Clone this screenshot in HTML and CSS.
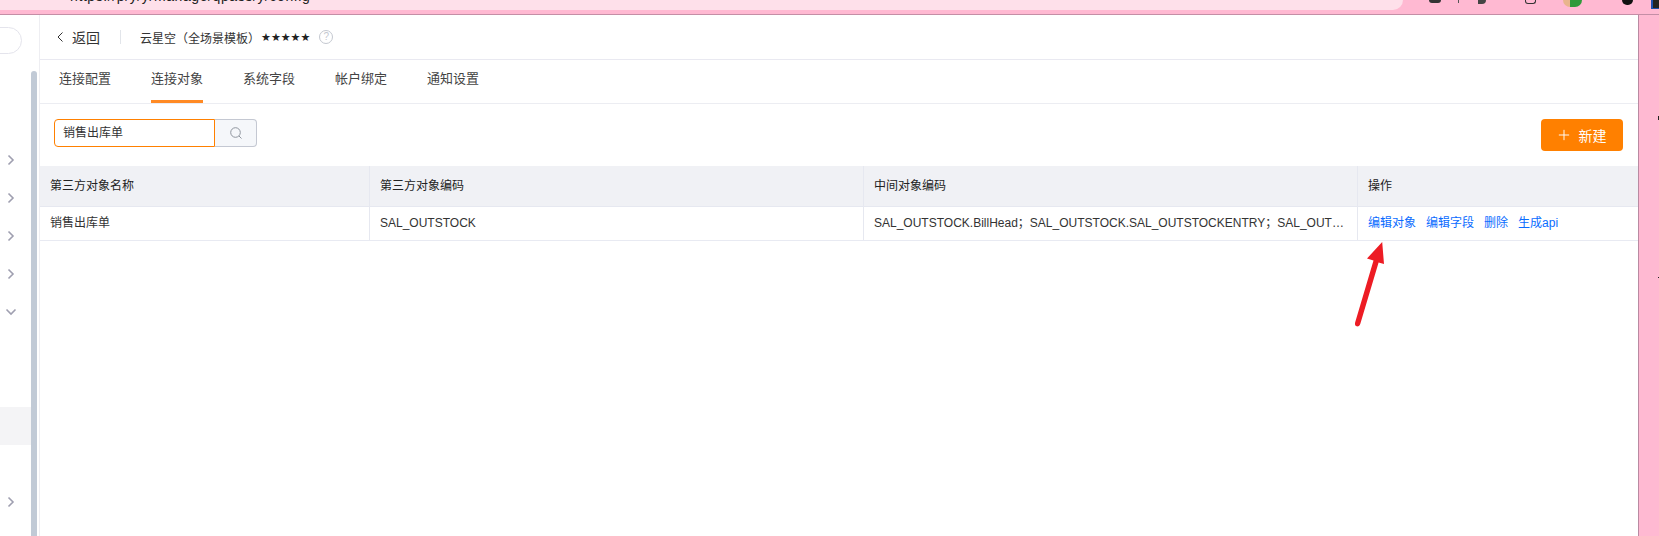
FILE: index.html
```html
<!DOCTYPE html>
<html lang="zh-CN">
<head>
<meta charset="utf-8">
<title>连接对象</title>
<link rel="stylesheet" href="styles.css">
</head>
<body>
<div class="chrome">
  <div class="urlbar"><span class="urltext">https://p/y/y/manage/qpass/y/config</span></div>
  <div class="tools">
    <span class="tool t-gear"></span>
    <span class="tool t-line"></span>
    <span class="tool t-flag"></span>
    <span class="tool t-box"></span>
    <span class="tool t-leaf"></span>
    <span class="tool t-dot"></span>
    <span class="tool t-blue"></span>
  </div>
</div>
<div class="workspace">
  <aside class="sidebar">
    <div class="side-list">
      <div class="side-search"></div>
      <div class="side-row"><svg class="chev" viewBox="0 0 8 12"><path d="M1.500 1.500 6 6l-4.500 4.500"/></svg></div>
      <div class="side-row"><svg class="chev" viewBox="0 0 8 12"><path d="M1.500 1.500 6 6l-4.500 4.500"/></svg></div>
      <div class="side-row"><svg class="chev" viewBox="0 0 8 12"><path d="M1.500 1.500 6 6l-4.500 4.500"/></svg></div>
      <div class="side-row"><svg class="chev" viewBox="0 0 8 12"><path d="M1.500 1.500 6 6l-4.500 4.500"/></svg></div>
      <div class="side-row"><svg class="chev-down" viewBox="0 0 12 8"><path d="M1.500 1.500 6 6l4.500-4.500"/></svg></div>
      <div class="side-row"></div>
      <div class="side-row"></div>
      <div class="side-row selected"></div>
      <div class="side-row"></div>
      <div class="side-row"><svg class="chev" viewBox="0 0 8 12"><path d="M1.500 1.500 6 6l-4.500 4.500"/></svg></div>
    </div>
    <div class="side-track"><div class="side-thumb"></div></div>
  </aside>
  <main class="main">
    <header class="head">
      <svg class="back-icon" viewBox="0 0 6 10"><path d="M5.500 .5 1 5l4.500 4.500"/></svg>
      <span class="back-text">返回</span>
      <span class="head-sep"></span>
      <span class="head-title">云星空（全场景模板）</span>
      <span class="stars">★★★★★</span>
      <span class="help">?</span>
    </header>
    <nav class="tabs">
      <span class="tab">连接配置</span>
      <span class="tab active">连接对象</span>
      <span class="tab">系统字段</span>
      <span class="tab">帐户绑定</span>
      <span class="tab">通知设置</span>
    </nav>
    <div class="toolbar">
      <div class="search">
        <div class="search-input">销售出库单</div>
        <div class="search-btn">
          <svg class="search-icon" viewBox="0 0 14 14"><circle cx="6.500" cy="6.500" r="4.800"/><path d="m10 10 2.500 2.500"/></svg>
        </div>
      </div>
      <button class="new-btn"><svg class="plus" viewBox="0 0 14 14"><path d="M7 1v12M1 7h12"/></svg>新建</button>
    </div>
    <div class="grid grid-head">
      <div class="cell">第三方对象名称</div>
      <div class="cell">第三方对象编码</div>
      <div class="cell">中间对象编码</div>
      <div class="cell">操作</div>
    </div>
    <div class="grid grid-row">
      <div class="cell">销售出库单</div>
      <div class="cell">SAL_OUTSTOCK</div>
      <div class="cell clip">SAL_OUTSTOCK.BillHead；SAL_OUTSTOCK.SAL_OUTSTOCKENTRY；SAL_OUTSTO</div>
      <div class="cell links">
        <a class="link">编辑对象</a>
        <a class="link">编辑字段</a>
        <a class="link">删除</a>
        <a class="link">生成api</a>
      </div>
    </div>
  </main>
  <div class="gutter"></div>
</div>
<svg class="arrow" viewBox="0 0 40 96" aria-hidden="true">
  <path d="M26.200 0 28 22 22.600 20.500 4.400 81.500C3.800 83.700 2.300 84.700 .8 84.300-.8 83.800-1.400 82.300-.8 80.200L17.500 18.600 11 16.500Z"/>
</svg>
<span class="speck speck-a"></span>
<span class="speck speck-b"></span>
</body>
</html>
```
FILE: styles.css
```css
* { box-sizing: border-box; }
html, body { margin: 0; height: 536px; overflow: hidden; }
body {
  width: 1659px;
  background: #ffb9d2;
  font-family: "Liberation Sans", "Noto Sans CJK SC", sans-serif;
  font-size: 12px;
  color: #333;
  display: flex;
  flex-direction: column;
}

/* browser strip */
.chrome { height: 15px; display: flex; border-bottom: 1px solid #c48ea6; flex: none; }
.urlbar {
  width: 1403px;
  height: 10px;
  flex: none;
  background: #fee0ea;
  border-bottom-right-radius: 10px;
  overflow: hidden;
}
.urltext {
  display: block;
  margin: -12px 0 0 70px;
  font-size: 14px;
  line-height: 16px;
  letter-spacing: .6px;
  color: #222;
}
.tools { flex: 1; display: flex; align-items: flex-start; min-width: 0; }
.tool { display: block; flex: none; }
.t-gear { margin-left: 26px; width: 12px; height: 3px; background: #333; border-radius: 0 0 6px 6px; }
.t-line { margin-left: 17px; width: 1px; height: 3px; background: #555; }
.t-flag { margin-left: 19px; width: 8px; height: 4px; background: #444; border-radius: 0 0 4px 0; }
.t-box { margin-left: 39px; width: 11px; height: 4px; border: 1px solid #333; border-top: 0; border-radius: 0 0 3px 3px; }
.t-leaf { margin-left: 27px; width: 19px; height: 7px; background: linear-gradient(90deg, #e9b48d 35%, #2f9a3a 35%); border-radius: 0 0 10px 10px; }
.t-dot { margin-left: 40px; width: 11px; height: 5px; background: #111; border-radius: 0 0 6px 6px; }
.t-blue { margin-left: 18px; width: 8px; height: 9px; background: #222; border-left: 2px solid #1c4fb0; border-bottom: 1px solid #1c4fb0; }

.workspace { flex: 1; display: flex; min-height: 0; }

/* left menu */
.sidebar { width: 40px; flex: none; display: flex; background: #fff; border-right: 1px solid #eeeef2; }
.side-list { width: 31px; flex: none; display: flex; flex-direction: column; }
.side-search {
  height: 27px;
  margin: 12px 9px 87px -20px;
  border: 1px solid #e4e4ec;
  border-radius: 0 14px 14px 0;
  flex: none;
}
.side-row { height: 38px; flex: none; display: flex; align-items: center; justify-content: flex-end; padding-right: 16px; }
.side-row.selected { background: #f4f4f6; }
.chev { width: 8px; height: 12px; fill: none; stroke: #9f9fb0; stroke-width: 1.600; }
.chev-down { width: 12px; height: 8px; margin-right: -2px; fill: none; stroke: #9f9fb0; stroke-width: 1.600; }
.side-track { width: 6px; flex: none; padding-top: 56px; }
.side-thumb { height: 100%; background: #c1cad6; border-radius: 3px 3px 0 0; }

/* main */
.main { width: 1598px; flex: none; background: #fff; display: flex; flex-direction: column; }
.head { height: 45px; flex: none; display: flex; align-items: center; padding-left: 17px; border-bottom: 1px solid #e9e9f1; }
.back-icon { width: 6px; height: 10px; fill: none; stroke: #333; stroke-width: 1; }
.back-text { margin-left: 9px; font-size: 14px; color: #333; }
.head-sep { width: 1px; height: 14px; margin: 0 19px 0 20px; background: #e2e5ea; }
.head-title { font-size: 12px; color: #333; }
.stars { margin-left: 1px; font-family: "DejaVu Sans", sans-serif; font-size: 11px; color: #222; }
.help {
  width: 14px;
  height: 14px;
  margin-left: 9px;
  border: 1.500px solid #c4c8d0;
  border-radius: 50%;
  color: #c4c8d0;
  font-size: 10px;
  line-height: 11px;
  text-align: center;
}
.tabs { height: 44px; flex: none; display: flex; gap: 40px; padding-left: 19px; border-bottom: 1px solid #ecedf2; }
.tab { font-size: 13px; line-height: 38px; color: #444; height: 43px; }
.tab.active { border-bottom: 3px solid #ff8a24; }

.toolbar { height: 62px; flex: none; display: flex; justify-content: space-between; align-items: flex-start; padding: 15px 15px 0 14px; }
.search { display: flex; height: 28px; }
.search-input {
  width: 161px;
  padding-left: 8px;
  border: 1px solid #ff8000;
  border-radius: 4px 0 0 4px;
  font-size: 12px;
  line-height: 26px;
  color: #333;
}
.search-btn {
  width: 42px;
  display: flex;
  align-items: center;
  justify-content: center;
  background: #f5f7fa;
  border: 1px solid #c4c8d2;
  border-left: 0;
  border-radius: 0 4px 4px 0;
}
.search-icon { width: 14px; height: 14px; fill: none; stroke: #8f959e; stroke-width: 1; }
.new-btn {
  width: 82px;
  height: 32px;
  display: flex;
  align-items: center;
  justify-content: center;
  gap: 9px;
  padding: 0;
  background: #ff8000;
  border: 0;
  border-radius: 4px;
  color: #fff;
  font: 14px "Liberation Sans", "Noto Sans CJK SC", sans-serif;
}
.plus { width: 12px; height: 12px; fill: none; stroke: #fff; stroke-width: 1.100; }

.grid { display: grid; grid-template-columns: 330px 494px 494px 1fr; flex: none; }
.grid-head { height: 41px; background: #f0f1f5; border-bottom: 1px solid #e6e8f0; line-height: 40px; color: #222; }
.grid-row { height: 34px; line-height: 32px; border-bottom: 1px solid #e8eaf2; }
.cell { padding: 0 10px; border-right: 1px solid #e6e8f0; white-space: nowrap; min-width: 0; }
.cell:last-child { border-right: 0; }
.clip { overflow: hidden; text-overflow: ellipsis; }
.links { display: flex; gap: 10px; }
.link { color: #0a6cff; }

.gutter { flex: 1; border-left: 1px solid #b98aa2; }

/* annotation */
.arrow { position: absolute; left: 1356px; top: 242px; width: 40px; height: 96px; overflow: visible; }
.arrow path { fill: #ed1c24; }
.speck { position: absolute; left: 1658px; width: 1px; background: #222; }
.speck-a { top: 116px; height: 4px; }
.speck-b { top: 277px; height: 1px; }
```
